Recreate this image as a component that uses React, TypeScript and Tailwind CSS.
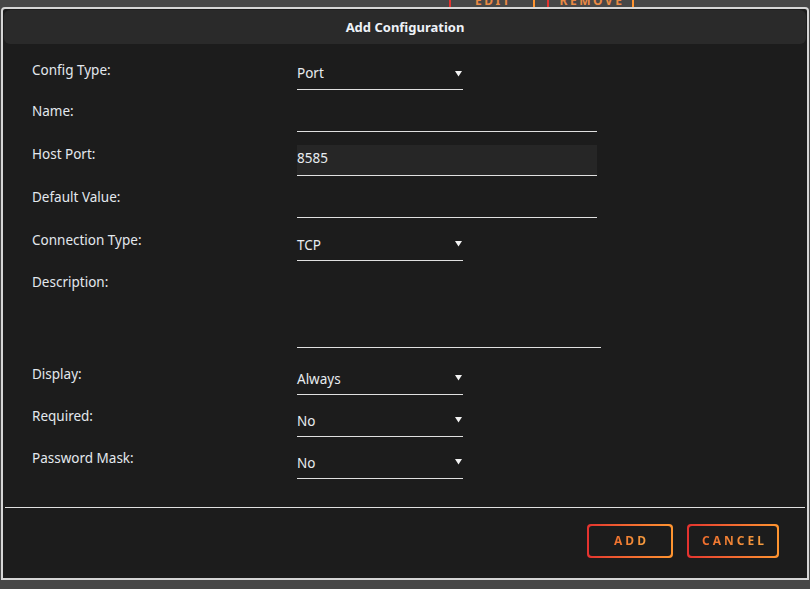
import React from "react";

const font = { fontFamily: '"Noto Sans", "Open Sans", sans-serif' };

function Arrow() {
  return (
    <svg width="7" height="7" viewBox="0 0 7 7" className="absolute right-[1px] top-[9px]">
      <path d="M0 1 H7 L3.5 6.5 Z" fill="#f2f2f2" />
    </svg>
  );
}

function Select({ value, pt = "pt-[3px]" }: { value: string; pt?: string }) {
  return (
    <div className={`relative h-full w-[166px] border-b border-[#e0e0e0] ${pt} text-[13.5px] leading-[18px] text-[#e8ecf0]`}>
      {value}
      <Arrow />
    </div>
  );
}

function Row({ label, mt, h, children }: { label: string; mt: string; h: string; children: React.ReactNode }) {
  return (
    <div className={`flex ${mt} ${h}`}>
      <div className="w-[265px] shrink-0 text-[13.5px] leading-[18px] text-[#e3e8ee]">{label}</div>
      <div className="h-full">{children}</div>
    </div>
  );
}

function GradButton({ text, w }: { text: string; w: string }) {
  return (
    <div className={`${w} h-[34px] rounded-[4px] bg-gradient-to-r from-[#e4312f] to-[#ff9530] p-[2px]`}>
      <div className="flex h-full w-full items-center justify-center rounded-[3px] bg-[#1c1c1c]">
        <span className="bg-gradient-to-r from-[#ee6a2c] to-[#f7a040] bg-clip-text text-[12px] font-bold tracking-[3px] text-transparent pl-[3px]">
          {text}
        </span>
      </div>
    </div>
  );
}

function BackButton({ text, w }: { text: string; w: string }) {
  return (
    <div className={`${w} h-[34px] rounded-[4px] bg-gradient-to-r from-[#e4312f] to-[#ff9530] p-[2px]`}>
      <div className="flex h-full w-full items-center justify-center rounded-[3px] bg-[#474747]">
        <span className="text-[12px] font-bold tracking-[2.5px] text-[#ea8a44] pl-[3px]">{text}</span>
      </div>
    </div>
  );
}

export default function App() {
  return (
    <div className="h-[589px] w-[810px] overflow-hidden bg-[#474747]" style={font}>
      <div className="h-[7px] overflow-hidden">
        <div className="ml-[449px] mt-[-16px] flex gap-[12px]">
          <BackButton text="EDIT" w="w-[86px]" />
          <BackButton text="REMOVE" w="w-[87px]" />
        </div>
      </div>
      <div className="mx-[1px] h-[573px] rounded-t-[4px] border-2 border-[#d6d6d6] bg-[#1c1c1c] flex flex-col">
        <div className="mx-[1px] mt-[1px] flex h-[34px] items-center justify-center rounded-[6px] bg-[#2a2a2a] pt-[2px] text-[13px] font-bold text-[#eef2f8]">
          Add Configuration
        </div>
        <div className="pl-[29px] pt-[17px] flex flex-col">
          <Row label="Config Type:" mt="mt-0" h="h-[29px]">
            <Select value="Port" />
          </Row>
          <Row label="Name:" mt="mt-[12px]" h="h-[30px]">
            <div className="h-full w-[300px] border-b border-[#e0e0e0]" />
          </Row>
          <Row label="Host Port:" mt="mt-[13px]" h="h-[31px]">
            <div className="h-full w-[300px] border-b border-[#e0e0e0] bg-[#262626] pt-[4px] text-[13.5px] leading-[18px] text-[#e8ecf0]">
              8585
            </div>
          </Row>
          <Row label="Default Value:" mt="mt-[12px]" h="h-[30px]">
            <div className="h-full w-[300px] border-b border-[#e0e0e0]" />
          </Row>
          <Row label="Connection Type:" mt="mt-[13px]" h="h-[30px]">
            <Select value="TCP" pt="pt-[5px]" />
          </Row>
          <Row label="Description:" mt="mt-[12px]" h="h-[75px]">
            <div className="h-full w-[304px] border-b border-[#e0e0e0]" />
          </Row>
          <Row label="Display:" mt="mt-[17px]" h="h-[30px]">
            <Select value="Always" pt="pt-[5px]" />
          </Row>
          <Row label="Required:" mt="mt-[12px]" h="h-[30px]">
            <Select value="No" pt="pt-[5px]" />
          </Row>
          <Row label="Password Mask:" mt="mt-[12px]" h="h-[30px]">
            <Select value="No" pt="pt-[5px]" />
          </Row>
        </div>
        <div className="mx-[2px] mt-[28px] h-px bg-[#e0e0e0]" />
        <div className="mt-[16px] flex justify-end gap-[14px] pr-[28px]">
          <GradButton text="ADD" w="w-[86px]" />
          <GradButton text="CANCEL" w="w-[92px]" />
        </div>
      </div>
    </div>
  );
}
